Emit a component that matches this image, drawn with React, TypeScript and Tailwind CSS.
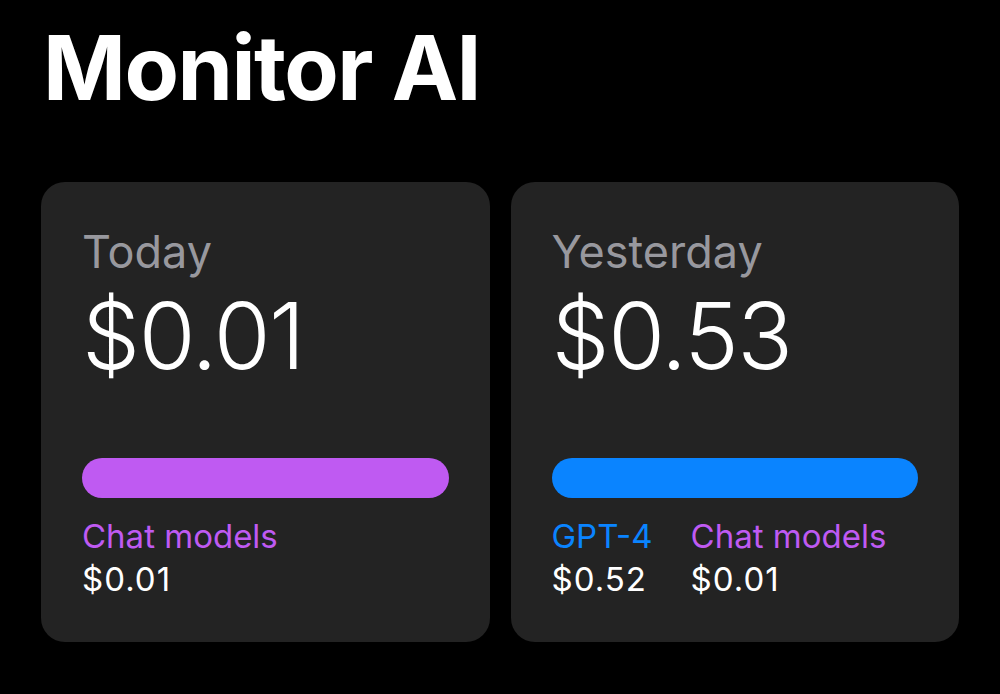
const cards = [
  {
    label: 'Today',
    total: '$0.01',
    bar: 'bg-[#bf5af2]',
    items: [{ name: 'Chat models', cost: '$0.01', color: 'text-[#bf5af2]' }],
  },
  {
    label: 'Yesterday',
    total: '$0.53',
    bar: 'bg-[#0a84ff]',
    items: [
      { name: 'GPT-4', cost: '$0.52', color: 'text-[#0a84ff]' },
      { name: 'Chat models', cost: '$0.01', color: 'text-[#bf5af2]' },
    ],
  },
];

export default function App() {
  return (
    <div className="w-[1000px] h-[694px] bg-black overflow-hidden font-['Inter',sans-serif]">
      <h1 className="pt-[23px] pl-[43px] text-[89px] leading-none font-bold text-white tracking-[-1.5px]">
        Monitor AI
      </h1>
      <div className="mt-[70px] px-[41px] flex gap-[21px]">
        {cards.map((card) => (
          <div key={card.label} className="flex-1 h-[460px] rounded-[24px] bg-[#232323] px-[41px] pt-[47px]">
            <div className="text-[45px] leading-none text-[#98989e]">{card.label}</div>
            <div className="mt-[16px] text-[92px] leading-none font-light text-white tracking-[-1.5px]">
              {card.total}
            </div>
            <div className={`mt-[76px] h-[40px] rounded-full ${card.bar}`} />
            <div className="mt-[17px] flex gap-[38px] text-[33px] leading-[43px]">
              {card.items.map((item) => (
                <div key={item.name}>
                  <div className={item.color}>{item.name}</div>
                  <div className="text-white tracking-[1px]">{item.cost}</div>
                </div>
              ))}
            </div>
          </div>
        ))}
      </div>
    </div>
  );
}
